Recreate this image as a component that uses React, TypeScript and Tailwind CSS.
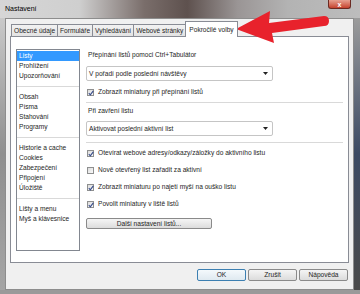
import React from "react";

const font = { fontFamily: '"Liberation Sans", Arial, sans-serif' };

const tabs = ["Obecné údaje", "Formuláře", "Vyhledávání", "Webové stránky", "Pokročilé volby"];

const sections = [
  ["Listy", "Prohlížení", "Upozorňování"],
  ["Obsah", "Písma", "Stahování", "Programy"],
  ["Historie a cache", "Cookies", "Zabezpečení", "Připojení", "Úložiště"],
  ["Lišty a menu", "Myš a klávesnice"],
];

function Check({ checked, label }: { checked: boolean; label: string }) {
  return (
    <div className="flex h-[12px] items-center gap-[4px] pl-[1px]">
      <span className="grid h-[7px] w-[7px] place-items-center border border-[#8e8f8f] bg-gradient-to-br from-[#dcdcdc] to-[#fbfbfb]">
        {checked && (
          <svg width="6" height="6" viewBox="0 0 6 6">
            <path d="M0.8 3.2 L2.3 4.8 L5.3 0.9" fill="none" stroke="#3b4f8c" strokeWidth="1.2" />
          </svg>
        )}
      </span>
      <span>{label}</span>
    </div>
  );
}

function Select({ value }: { value: string }) {
  return (
    <div className="flex h-[15px] items-center justify-between rounded-[2px] border border-[#c5c5c5] bg-white pl-[2px] pr-[4px]">
      <span>{value}</span>
      <svg width="5" height="3" viewBox="0 0 5 3">
        <path d="M0 0 H5 L2.5 3 Z" fill="#222" />
      </svg>
    </div>
  );
}

function Btn({ label, primary }: { label: string; primary?: boolean }) {
  return (
    <div
      className={
        "flex h-[12px] w-[49px] items-center justify-center rounded-[2px] border " +
        (primary
          ? "border-[#3c7fb1] bg-gradient-to-b from-[#f4f9fc] to-[#dfe9f0]"
          : "border-[#8a8a8a] bg-gradient-to-b from-[#f5f5f5] to-[#dcdcdc]")
      }
    >
      {label}
    </div>
  );
}

export default function App() {
  return (
    <div className="relative h-[294px] w-[360px] overflow-hidden text-[6.6px] leading-[10px] text-[#1e1e1e]" style={font}>
      <div className="flex h-[18px] bg-[linear-gradient(90deg,#d6d6d6_0%,#cfcfcf_22%,#7a6e6b_40%,#5e514e_52%,#9a9595_66%,#b3b3b3_80%,#bdbdbd_100%)]">
        <span className="mt-[4px] pl-[5px] text-[7px] text-black">Nastavení</span>
        <div className="ml-auto mr-[9px] grid h-[9px] w-[23px] place-items-center rounded-b-[3px] border border-t-0 border-[#6b2a22] bg-gradient-to-b from-[#e6a090] to-[#c4402c] text-[7px] leading-none font-bold text-white">
          x
        </div>
      </div>
      <div className="flex h-[272px]">
        <div className="w-[5px] bg-gradient-to-b from-[#c9c9c9] via-[#8f8f8f] to-[#a5a5a5]" />
        <div className="flex w-[349px] flex-col border border-[#8d8d8d] bg-[#f0f0f0]">
          <div className="flex h-[17px] items-end pl-[5px] pt-[2px]">
            {tabs.map((t, i) =>
              i === 4 ? (
                <div key={t} className="relative z-10 -mb-px -ml-px flex h-[16px] items-center border border-b-0 border-[#898c95] bg-white px-[3px]">
                  {t}
                </div>
              ) : (
                <div key={t} className="-ml-px flex h-[12px] items-center border border-b-0 border-[#898c95] bg-gradient-to-b from-[#f2f2f2] to-[#e3e3e3] px-[2px] first:ml-0">
                  {t}
                </div>
              )
            )}
          </div>
          <div className="mx-[4px] flex h-[227px] gap-[6px] border border-[#898c95] bg-white pl-[5px] pr-[5px] pt-[12px]">
            <div className="h-[202px] w-[64px] border border-[#828790] bg-white pt-[1px]">
              {sections.map((s, si) => (
                <div key={si} className={si > 0 ? "mt-[5px] border-t border-[#d9d9d9] pt-[5px]" : ""}>
                  {s.map((item) => (
                    <div key={item} className={"h-[10px] pl-[2px] " + (item === "Listy" ? "bg-[#3399ff] text-white" : "")}>
                      {item}
                    </div>
                  ))}
                </div>
              ))}
            </div>
            <div className="flex flex-1 flex-col pt-[1px]">
              <div className="pl-[2px]">Přepínání listů pomoci Ctrl+Tabulátor</div>
              <div className="mt-[6px] w-[187px]">
                <Select value="V pořadí podle poslední návštěvy" />
              </div>
              <div className="mt-[5px]">
                <Check checked label="Zobrazit miniatury při přepínání listů" />
              </div>
              <div className="mt-[4px] border-t border-[#d9d9d9]" />
              <div className="mt-[3px] pl-[2px]">Při zavření listu</div>
              <div className="mt-[5px] w-[187px]">
                <Select value="Aktivovat poslední aktivní list" />
              </div>
              <div className="mt-[6px] border-t border-[#d9d9d9]" />
              <div className="mt-[4px] flex flex-col gap-[5px]">
                <Check checked label="Otevírat webové adresy/odkazy/záložky do aktivního listu" />
                <Check checked={false} label="Nově otevřený list zařadit za aktivní" />
                <Check checked label="Zobrazit miniaturu po najetí myší na ouško listu" />
                <Check checked label="Povolit miniatury v liště listů" />
              </div>
              <div className="mt-[8px] flex h-[11px] w-[126px] items-center justify-center rounded-[2px] border border-[#8a8a8a] bg-gradient-to-b from-[#f5f5f5] to-[#dcdcdc]">
                Další nastavení listů...
              </div>
            </div>
          </div>
          <div className="mr-[5px] mt-[6px] flex justify-end gap-[2px]">
            <Btn label="OK" primary />
            <Btn label="Zrušit" />
            <Btn label="Nápověda" />
          </div>
        </div>
        <div className="flex-1 bg-gradient-to-b from-[#9c9c9c] via-[#3c4a63] to-[#4a4a4a]" />
      </div>
      <div className="h-[4px] bg-[#9a9a9a]" />
      <svg className="pointer-events-none absolute left-0 top-0" width="360" height="60" viewBox="0 0 360 60">
        <path d="M236 29 L270 11 L269 23 L324 16 Q329 16 329 21 Q329 26 324 26 L272 33 L274 43 Z" fill="#e8222c" />
      </svg>
    </div>
  );
}
